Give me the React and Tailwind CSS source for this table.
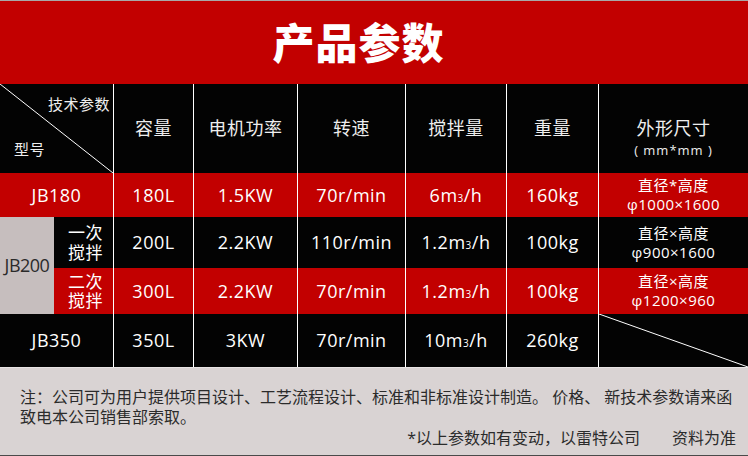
const font = { fontFamily: "'Open Sans','Noto Sans CJK SC',sans-serif" }

function Diagonal() {
  return (
    <svg className="absolute inset-0 h-full w-full" preserveAspectRatio="none" viewBox="0 0 100 100">
      <line x1="0" y1="0" x2="100" y2="100" stroke="#fff" strokeWidth="1" vectorEffect="non-scaling-stroke" />
    </svg>
  )
}

function M3({ pre }) {
  return (
    <span>
      {pre}m<span className="text-[10px]">3</span>/h
    </span>
  )
}

function Size({ a, b }) {
  return (
    <div className="flex flex-col items-center text-[15px] leading-[19px]">
      <span>{a}</span>
      <span>{b}</span>
    </div>
  )
}

const rows = [
  { bg: 'bg-[#c20000]', vals: ['180L', '1.5KW', '70r/min', <M3 pre="6" />, '160kg'], size: <Size a="直径*高度" b="φ1000×1600" /> },
  { bg: 'bg-[#030303]', vals: ['200L', '2.2KW', '110r/min', <M3 pre="1.2" />, '100kg'], size: <Size a="直径×高度" b="φ900×1600" /> },
  { bg: 'bg-[#c20000]', vals: ['300L', '2.2KW', '70r/min', <M3 pre="1.2" />, '100kg'], size: <Size a="直径×高度" b="φ1200×960" /> },
  { bg: 'bg-[#030303]', vals: ['350L', '3KW', '70r/min', <M3 pre="10" />, '260kg'], size: null },
]

const cell = 'flex items-center justify-center border-l border-white'

export default function App() {
  return (
    <div className="w-[748px] h-[456px] overflow-hidden bg-[#030303] text-white" style={font}>
      <div className="h-[84px] border-t border-[#a8a8a8] bg-[#c20000] flex items-center justify-center pr-[31px]">
        <span className="text-[42px] font-black leading-none tracking-[1px]">产品参数</span>
      </div>

      <div className="grid grid-cols-[54px_59px_80px_104px_108px_101px_92px_150px] grid-rows-[89px_44px_51px_46px_53px] text-[18px] tracking-[0.5px]">
        {/* header row */}
        <div className="col-span-2 relative text-[15px] text-[#eee]">
          <Diagonal />
          <span className="absolute left-[48px] top-[9px]">技术参数</span>
          <span className="absolute left-[14px] top-[54px]">型号</span>
        </div>
        {['容量', '电机功率', '转速', '搅拌量', '重量'].map(t => (
          <div key={t} className={`${cell} text-[#eee]`}>{t}</div>
        ))}
        <div className="flex flex-col items-center border-l border-white pt-[33px] text-[#eee]">
          <span className="leading-[22px]">外形尺寸</span>
          <span className="text-[13px] leading-[22px] tracking-[1px]">( mm*mm )</span>
        </div>

        {/* JB180 */}
        <div className={`col-span-2 flex items-center justify-center ${rows[0].bg}`}>JB180</div>
        {rows[0].vals.map((v, i) => (
          <div key={i} className={`${cell} ${rows[0].bg}`}>{v}</div>
        ))}
        <div className={`${cell} ${rows[0].bg}`}>{rows[0].size}</div>

        {/* JB200 */}
        <div className="row-span-2 flex items-center justify-center bg-[#c6bebe] text-[#2a2a2a] tracking-[-0.5px]">JB200</div>
        <div className={`flex flex-col items-center justify-center pl-[4px] ${rows[1].bg} text-[17px] leading-[20px]`}>
          <span>一次</span>
          <span>搅拌</span>
        </div>
        {rows[1].vals.map((v, i) => (
          <div key={i} className={`${cell} ${rows[1].bg}`}>{v}</div>
        ))}
        <div className={`${cell} ${rows[1].bg}`}>{rows[1].size}</div>

        <div className={`flex flex-col items-center justify-center pl-[4px] ${rows[2].bg} text-[17px] leading-[19px]`}>
          <span>二次</span>
          <span>搅拌</span>
        </div>
        {rows[2].vals.map((v, i) => (
          <div key={i} className={`${cell} ${rows[2].bg}`}>{v}</div>
        ))}
        <div className={`${cell} ${rows[2].bg}`}>{rows[2].size}</div>

        {/* JB350 */}
        <div className={`col-span-2 flex items-center justify-center ${rows[3].bg}`}>JB350</div>
        {rows[3].vals.map((v, i) => (
          <div key={i} className={`${cell} ${rows[3].bg}`}>{v}</div>
        ))}
        <div className={`relative border-l border-white ${rows[3].bg}`}>
          <Diagonal />
        </div>
      </div>

      <div className="h-[89px] border-t border-[#e8e4e4] border-b border-b-[#4a4a4a] bg-[#d9d3d3] text-[#2b2b2b] text-[16px] leading-[20px] pl-[20px] pr-[12px] pt-[19px] whitespace-nowrap">
        <div>注：公司可为用户提供项目设计、工艺流程设计、标准和非标准设计制造。 价格、 新技术参数请来函</div>
        <div>致电本公司销售部索取。</div>
        <div className="flex justify-end gap-[32px] mt-[1px]">
          <span>*以上参数如有变动，以雷特公司</span>
          <span>资料为准</span>
        </div>
      </div>
    </div>
  )
}
